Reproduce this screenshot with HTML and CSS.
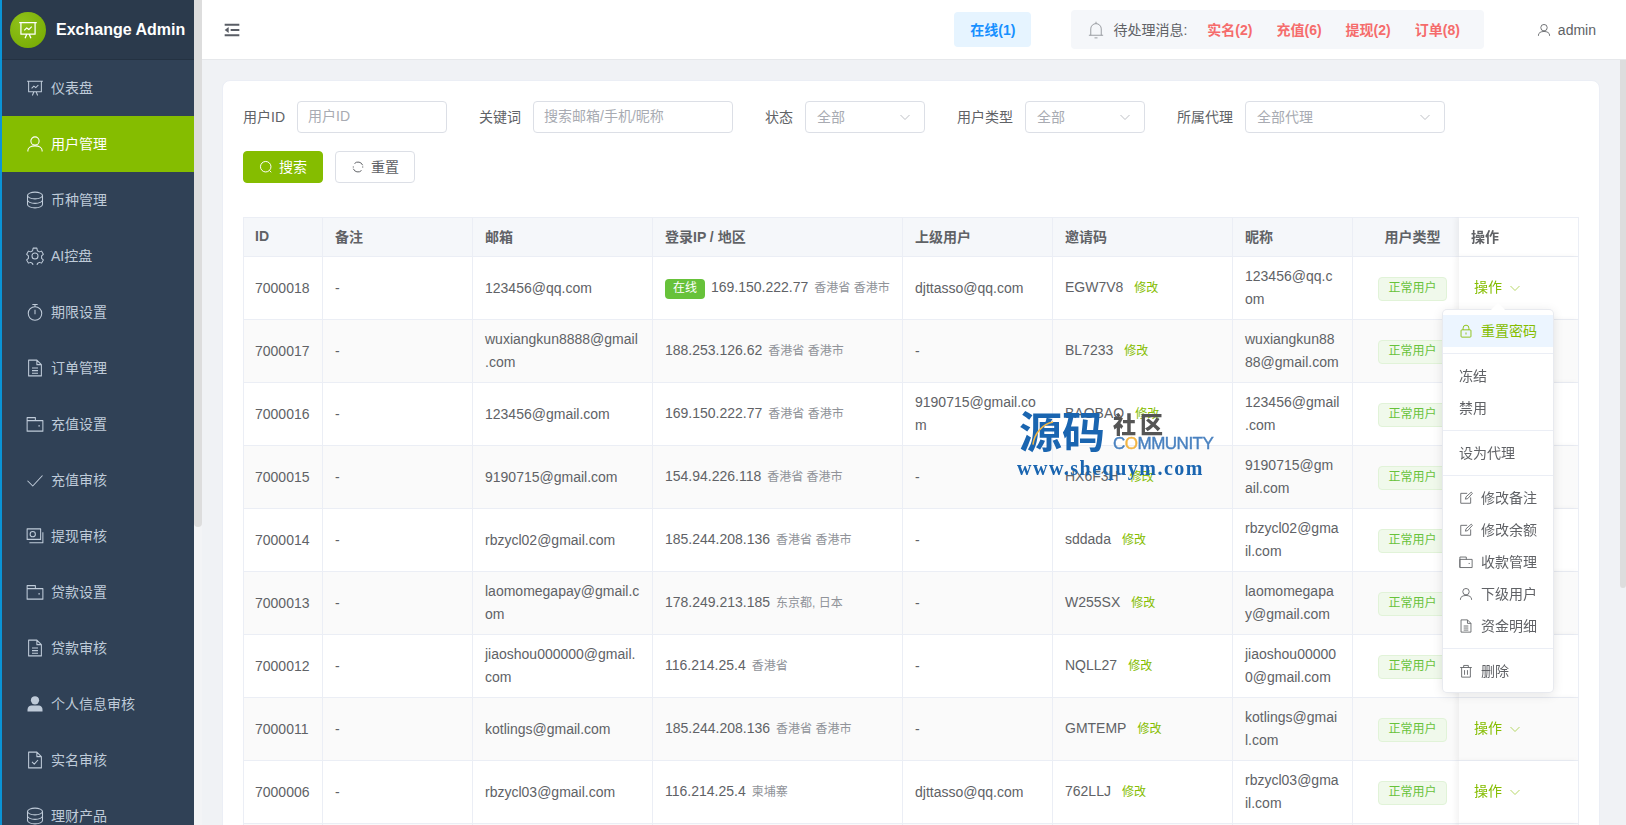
FILE: index.html
```html
<!DOCTYPE html>
<html lang="zh-CN">
<head>
    <meta charset="UTF-8" />
    <title>Exchange Admin</title>
    <link rel="stylesheet" href="styles.css">
</head>
<body>
    <!-- icon sprite -->
    <svg class="sprite" xmlns="http://www.w3.org/2000/svg">
        <symbol id="i-board" viewBox="0 0 24 24"><path d="M1.500 3h21M3.500 3v14h17V3M8.500 22l2-5M15.500 22l-2-5M7.500 12.500l3-3 2.500 2 3.500-3.500"/></symbol>
        <symbol id="i-user" viewBox="0 0 24 24"><circle cx="12" cy="8" r="5.500"/><path d="M2.500 22v-1.500c0-3.500 4-6 9.500-6s9.500 2.500 9.500 6V22"/></symbol>
        <symbol id="i-coin" viewBox="0 0 24 24"><ellipse cx="12" cy="6" rx="10" ry="4.500"/><path d="M2 6v12c0 2.500 4.500 4.500 10 4.500s10-2 10-4.500V6M2 12c0 2.500 4.500 4.500 10 4.500s10-2 10-4.500"/></symbol>
        <symbol id="i-gear" viewBox="0 0 24 24"><circle cx="12" cy="12" r="4"/><path d="M9.500 1.500h5l.7 3.500 2.600 1.500 3-1 2.300 4.300-2.300 2v3.400l2.300 2-2.300 4.300-3-1-2.600 1.500-.7 3.500h-5l-.7-3.500-2.600-1.500-3 1-2.300-4.300 2.300-2v-3.400l-2.300-2 2.300-4.300 3 1 2.600-1.500z"/></symbol>
        <symbol id="i-timer" viewBox="0 0 24 24"><circle cx="12" cy="14" r="9"/><path d="M12 15V9M12 5V2M8.500 2h7"/></symbol>
        <symbol id="i-doc" viewBox="0 0 24 24"><path d="M3.500 1.500h11l6 6v15h-17zM14.500 1.500v6h6M8 12h8M8 15.500h8M8 19h8"/></symbol>
        <symbol id="i-wallet" viewBox="0 0 24 24"><path d="M1.500 21.500v-18h11v4M1.500 7.500h21v14h-21zM16.500 14.500h2"/></symbol>
        <symbol id="i-check" viewBox="0 0 24 24"><path d="M2 13l7 7L22 6"/></symbol>
        <symbol id="i-money" viewBox="0 0 24 24"><path d="M1.500 2.500h18v14h-18zM4.500 21h18V7"/><circle cx="9" cy="9.500" r="3.500"/></symbol>
        <symbol id="i-person" viewBox="0 0 24 24"><circle class="solid" cx="12" cy="7" r="5.500"/><path class="solid" d="M2 22v-2.500c0-4 3-5.500 5-5.500h10c2 0 5 1.500 5 5.500V22z"/></symbol>
        <symbol id="i-doccheck" viewBox="0 0 24 24"><path d="M3.500 1.500h11l6 6v15h-17zM14.500 1.500v6h6M8 14.500l3 3 5-5.500"/></symbol>
        <symbol id="i-lock" viewBox="0 0 24 24"><rect x="3.500" y="10" width="17" height="12.500" rx="1.500"/><path d="M7 10V7a5 5 0 0110 0v3M12 14.500v3.500"/></symbol>
        <symbol id="i-edit" viewBox="0 0 24 24"><path d="M14 4H3v17h17V11M11 14l1-4 9-8 2 2-8 9z"/></symbol>
        <symbol id="i-trash" viewBox="0 0 24 24"><path d="M2 6h20M8 6V2.500h8V6M4.500 6v16.500h15V6M9.500 10.500v8M14.500 10.500v8"/></symbol>
        <symbol id="i-bell" viewBox="0 0 24 24"><path d="M12 1v2.500M5 19v-8.500a7 7 0 0114 0V19M2.500 19h19M10 22.500h4"/></symbol>
        <symbol id="i-search" viewBox="0 0 24 24"><circle cx="11.500" cy="11.500" r="9"/><path d="M18 18l3 3"/></symbol>
        <symbol id="i-refresh" viewBox="0 0 24 24"><path d="M20 9a8.500 8.500 0 00-14-3M4 15a8.500 8.500 0 0014 3"/><path d="M3 12h2M19 12h2"/></symbol>
        <symbol id="i-chevron" viewBox="0 0 24 24"><path d="M3 8l9 9 9-9"/></symbol>
    </svg>

    <div class="layout">
        <aside class="sidebar">
            <div class="brand">
                <span class="brand-logo"><svg class="icon"><use href="#i-board"/></svg></span>
                <span class="brand-name">Exchange Admin</span>
            </div>
            <nav class="menu">
                <a class="menu-item"><svg class="icon"><use href="#i-board"/></svg>仪表盘</a>
                <a class="menu-item active"><svg class="icon"><use href="#i-user"/></svg>用户管理</a>
                <a class="menu-item"><svg class="icon"><use href="#i-coin"/></svg>币种管理</a>
                <a class="menu-item"><svg class="icon"><use href="#i-gear"/></svg>AI控盘</a>
                <a class="menu-item"><svg class="icon"><use href="#i-timer"/></svg>期限设置</a>
                <a class="menu-item"><svg class="icon"><use href="#i-doc"/></svg>订单管理</a>
                <a class="menu-item"><svg class="icon"><use href="#i-wallet"/></svg>充值设置</a>
                <a class="menu-item"><svg class="icon"><use href="#i-check"/></svg>充值审核</a>
                <a class="menu-item"><svg class="icon"><use href="#i-money"/></svg>提现审核</a>
                <a class="menu-item"><svg class="icon"><use href="#i-wallet"/></svg>贷款设置</a>
                <a class="menu-item"><svg class="icon"><use href="#i-doc"/></svg>贷款审核</a>
                <a class="menu-item"><svg class="icon"><use href="#i-person"/></svg>个人信息审核</a>
                <a class="menu-item"><svg class="icon"><use href="#i-doccheck"/></svg>实名审核</a>
                <a class="menu-item"><svg class="icon"><use href="#i-coin"/></svg>理财产品</a>
            </nav>
        </aside>
        <div class="side-track"><div class="side-thumb"></div></div>

        <div class="main">
            <header class="topbar">
                <svg class="fold" viewBox="0 0 24 24"><path d="M1 4h22M10 12h13M1 20h22"/><path class="solid" d="M1 12l6-4.500v9z"/></svg>
                <div class="online-pill">在线(1)</div>
                <div class="notice">
                    <svg class="icon bell"><use href="#i-bell"/></svg>
                    <span class="notice-label">待处理消息:</span>
                    <a class="notice-link">实名(2)</a>
                    <a class="notice-link">充值(6)</a>
                    <a class="notice-link">提现(2)</a>
                    <a class="notice-link">订单(8)</a>
                </div>
                <div class="account"><svg class="icon"><use href="#i-user"/></svg>admin</div>
            </header>

            <div class="body-row">
                <main class="content">
                    <section class="card">
                        <form class="filters">
                            <div class="field"><label>用户ID</label><input class="input w150" placeholder="用户ID"></div>
                            <div class="field"><label>关键词</label><input class="input w200" placeholder="搜索邮箱/手机/昵称"></div>
                            <div class="field"><label>状态</label><div class="input select w120">全部<svg class="icon"><use href="#i-chevron"/></svg></div></div>
                            <div class="field"><label>用户类型</label><div class="input select w120">全部<svg class="icon"><use href="#i-chevron"/></svg></div></div>
                            <div class="field"><label>所属代理</label><div class="input select w200">全部代理<svg class="icon"><use href="#i-chevron"/></svg></div></div>
                            <div class="field">
                                <button type="button" class="btn btn-primary"><svg class="icon"><use href="#i-search"/></svg>搜索</button>
                                <button type="button" class="btn"><svg class="icon"><use href="#i-refresh"/></svg>重置</button>
                            </div>
                        </form>

                        <div class="table-wrap">
                            <table class="users">
                                <colgroup>
                                    <col class="c80"><col class="c150"><col class="c180"><col class="c250"><col class="c150"><col class="c180"><col class="c120"><col class="c120"><col class="c120">
                                </colgroup>
                                <thead>
                                    <tr><th>ID</th><th>备注</th><th>邮箱</th><th>登录IP / 地区</th><th>上级用户</th><th>邀请码</th><th>昵称</th><th class="center">用户类型</th><th class="fixed">操作</th></tr>
                                </thead>
                                <tbody>
                                    <tr>
                                        <td>7000018</td><td>-</td><td>123456@qq.com</td>
                                        <td class="ip"><span class="tag-online">在线</span>169.150.222.77<span class="region">香港省 香港市</span></td>
                                        <td>djttasso@qq.com</td><td>EGW7V8<a class="mini">修改</a></td><td>123456@qq.com</td>
                                        <td class="center"><span class="tag">正常用户</span></td>
                                        <td class="fixed"><a class="action">操作<svg class="icon"><use href="#i-chevron"/></svg></a></td>
                                    </tr>
                                    <tr>
                                        <td>7000017</td><td>-</td><td>wuxiangkun8888@gmail.com</td>
                                        <td class="ip">188.253.126.62<span class="region">香港省 香港市</span></td>
                                        <td>-</td><td>BL7233<a class="mini">修改</a></td><td>wuxiangkun8888@gmail.com</td>
                                        <td class="center"><span class="tag">正常用户</span></td>
                                        <td class="fixed"><a class="action">操作<svg class="icon"><use href="#i-chevron"/></svg></a></td>
                                    </tr>
                                    <tr>
                                        <td>7000016</td><td>-</td><td>123456@gmail.com</td>
                                        <td class="ip">169.150.222.77<span class="region">香港省 香港市</span></td>
                                        <td>9190715@gmail.com</td><td>BAOBAO<a class="mini">修改</a></td><td>123456@gmail.com</td>
                                        <td class="center"><span class="tag">正常用户</span></td>
                                        <td class="fixed"><a class="action">操作<svg class="icon"><use href="#i-chevron"/></svg></a></td>
                                    </tr>
                                    <tr>
                                        <td>7000015</td><td>-</td><td>9190715@gmail.com</td>
                                        <td class="ip">154.94.226.118<span class="region">香港省 香港市</span></td>
                                        <td>-</td><td>HX6F3H<a class="mini">修改</a></td><td>9190715@gmail.com</td>
                                        <td class="center"><span class="tag">正常用户</span></td>
                                        <td class="fixed"><a class="action">操作<svg class="icon"><use href="#i-chevron"/></svg></a></td>
                                    </tr>
                                    <tr>
                                        <td>7000014</td><td>-</td><td>rbzycl02@gmail.com</td>
                                        <td class="ip">185.244.208.136<span class="region">香港省 香港市</span></td>
                                        <td>-</td><td>sddada<a class="mini">修改</a></td><td>rbzycl02@gmail.com</td>
                                        <td class="center"><span class="tag">正常用户</span></td>
                                        <td class="fixed"><a class="action">操作<svg class="icon"><use href="#i-chevron"/></svg></a></td>
                                    </tr>
                                    <tr>
                                        <td>7000013</td><td>-</td><td>laomomegapay@gmail.com</td>
                                        <td class="ip">178.249.213.185<span class="region">东京都, 日本</span></td>
                                        <td>-</td><td>W255SX<a class="mini">修改</a></td><td>laomomegapay@gmail.com</td>
                                        <td class="center"><span class="tag">正常用户</span></td>
                                        <td class="fixed"><a class="action">操作<svg class="icon"><use href="#i-chevron"/></svg></a></td>
                                    </tr>
                                    <tr>
                                        <td>7000012</td><td>-</td><td>jiaoshou000000@gmail.com</td>
                                        <td class="ip">116.214.25.4<span class="region">香港省</span></td>
                                        <td>-</td><td>NQLL27<a class="mini">修改</a></td><td>jiaoshou000000@gmail.com</td>
                                        <td class="center"><span class="tag">正常用户</span></td>
                                        <td class="fixed"><a class="action">操作<svg class="icon"><use href="#i-chevron"/></svg></a></td>
                                    </tr>
                                    <tr>
                                        <td>7000011</td><td>-</td><td>kotlings@gmail.com</td>
                                        <td class="ip">185.244.208.136<span class="region">香港省 香港市</span></td>
                                        <td>-</td><td>GMTEMP<a class="mini">修改</a></td><td>kotlings@gmail.com</td>
                                        <td class="center"><span class="tag">正常用户</span></td>
                                        <td class="fixed"><a class="action">操作<svg class="icon"><use href="#i-chevron"/></svg></a></td>
                                    </tr>
                                    <tr>
                                        <td>7000006</td><td>-</td><td>rbzycl03@gmail.com</td>
                                        <td class="ip">116.214.25.4<span class="region">柬埔寨</span></td>
                                        <td>djttasso@qq.com</td><td>762LLJ<a class="mini">修改</a></td><td>rbzycl03@gmail.com</td>
                                        <td class="center"><span class="tag">正常用户</span></td>
                                        <td class="fixed"><a class="action">操作<svg class="icon"><use href="#i-chevron"/></svg></a></td>
                                    </tr>
                                    <tr class="blank"><td></td><td></td><td></td><td></td><td></td><td></td><td></td><td></td><td class="fixed"></td></tr>
                                </tbody>
                            </table>
                        </div>
                    </section>
                </main>
                <div class="page-track"><div class="page-thumb"></div></div>
            </div>
        </div>
    </div>

    <!-- open row menu -->
    <div class="dropdown">
        <a class="drop-item on"><svg class="icon"><use href="#i-lock"/></svg>重置密码</a>
        <hr>
        <a class="drop-item">冻结</a>
        <a class="drop-item">禁用</a>
        <hr>
        <a class="drop-item">设为代理</a>
        <hr>
        <a class="drop-item"><svg class="icon"><use href="#i-edit"/></svg>修改备注</a>
        <a class="drop-item"><svg class="icon"><use href="#i-edit"/></svg>修改余额</a>
        <a class="drop-item"><svg class="icon"><use href="#i-wallet"/></svg>收款管理</a>
        <a class="drop-item"><svg class="icon"><use href="#i-user"/></svg>下级用户</a>
        <a class="drop-item"><svg class="icon"><use href="#i-doc"/></svg>资金明细</a>
        <hr>
        <a class="drop-item"><svg class="icon"><use href="#i-trash"/></svg>删除</a>
    </div>

    <!-- site watermark -->
    <div class="watermark">
        <svg class="wm-arc" viewBox="0 0 40 40"><path d="M3 38C5 20 18 6 34 3"/></svg>
        <span class="wm-big">源码</span>
        <span class="wm-she">社区</span>
        <span class="wm-com">C<b>O</b>MMUNITY</span>
        <span class="wm-url">www.shequym.com</span>
    </div>
</body>
</html>
```

FILE: styles.css
```css
*
{
    box-sizing: border-box;
}

html, body
{
    margin: 0;
    height: 100%;
    overflow: hidden;
}

body
{
    font-family: "Liberation Sans", "Noto Sans CJK SC", sans-serif;
    font-size: 14px;
    color: #606266;
    background-color: #f0f2f5;
}

.sprite
{
    display: none;
}

.icon
{
    width: 16px;
    height: 16px;
    flex: none;
    fill: none;
    stroke: currentColor;
    stroke-width: 1.6;
    stroke-linejoin: round;
}

.solid
{
    fill: currentColor;
    stroke: none;
}

.layout
{
    display: flex;
    height: 825px;
}

/* sidebar */
.sidebar
{
    width: 194px;
    flex: none;
    overflow: hidden;
    background-color: #304156;
    border-left: 2px solid #0a94d6;
}

.brand
{
    display: flex;
    align-items: center;
    height: 60px;
    padding-left: 8px;
    gap: 10px;
    background-color: #2b3a4c;
    border-bottom: 1px solid #243242;
}

.brand-logo
{
    display: flex;
    align-items: center;
    justify-content: center;
    width: 36px;
    height: 36px;
    border-radius: 50%;
    color: white;
    background: radial-gradient(circle at 35% 30%, #8fc21a, #74a800);
}

.brand-logo .icon
{
    width: 20px;
    height: 20px;
    stroke-width: 1.5;
}

.brand-name
{
    color: white;
    font-size: 16px;
    font-weight: bold;
    white-space: nowrap;
}

.menu-item
{
    display: flex;
    align-items: center;
    height: 56px;
    padding: 0 0 2px 24px;
    gap: 7px;
    color: #bfcbd9;
}

.menu-item .icon
{
    width: 18px;
    height: 18px;
    margin-top: 2px;
    stroke-width: 1.4;
}

.menu-item.active
{
    color: white;
    background-color: #85bd00;
}

.side-track
{
    width: 8px;
    flex: none;
    background-color: #f3f4f6;
}

.side-thumb
{
    height: 527px;
    background-color: #dddddd;
    border-radius: 0 0 4px 4px;
}

/* top bar */
.main
{
    flex: 1;
    min-width: 0;
    display: flex;
    flex-direction: column;
}

.topbar
{
    display: flex;
    align-items: center;
    flex: none;
    height: 60px;
    padding: 0 30px 0 22px;
    background-color: white;
    border-bottom: 1px solid #e6e8eb;
}

.fold
{
    width: 16px;
    height: 16px;
    color: #5a5e66;
    fill: none;
    stroke: currentColor;
    stroke-width: 3;
}

.online-pill
{
    margin-left: auto;
    padding: 0 16px;
    height: 35px;
    line-height: 37px;
    border-radius: 4px;
    font-weight: bold;
    color: #1890ff;
    background-color: #e6f4ff;
}

.notice
{
    display: flex;
    align-items: center;
    gap: 24px;
    height: 39px;
    margin-left: 40px;
    padding: 0 24px 0 16px;
    border-radius: 4px;
    background-color: #f5f7fa;
}

.bell
{
    width: 18px;
    height: 18px;
    margin: 1px -14px 0 0;
    color: #909399;
    stroke-width: 1.2;
}

.notice-label
{
    margin: 0 -4px 2px -2px;
}

.notice-link
{
    margin-bottom: 2px;
    font-weight: bold;
    color: #f56c6c;
}

.account
{
    display: flex;
    align-items: center;
    gap: 7px;
    margin-left: 53px;
}

.account .icon
{
    width: 14px;
    height: 14px;
    stroke-width: 1.5;
}

/* content */
.body-row
{
    flex: 1;
    min-height: 0;
    display: flex;
}

.content
{
    flex: 1;
    min-width: 0;
    padding: 20px;
}

.page-track
{
    width: 6px;
    flex: none;
}

.page-thumb
{
    height: 528px;
    background-color: #dddddd;
    border-radius: 0 0 3px 3px;
}

.card
{
    height: 900px;
    padding: 20px;
    background-color: white;
    border: 1px solid #ebeef5;
    border-radius: 8px;
}

.filters
{
    display: flex;
    flex-wrap: wrap;
    column-gap: 32px;
    row-gap: 18px;
    margin-bottom: 34px;
}

.field
{
    display: flex;
    align-items: center;
    gap: 12px;
}

.field label
{
    margin-bottom: 2px;
}

.input
{
    height: 32px;
    padding: 0 11px 2px;
    font: inherit;
    color: #a8abb2;
    background-color: white;
    border: 1px solid #dcdfe6;
    border-radius: 4px;
}

input.input
{
    padding-left: 10px;
}

.input::placeholder
{
    color: #a8abb2;
}

.w120
{
    width: 120px;
}

.w150
{
    width: 150px;
}

.w200
{
    width: 200px;
}

.select
{
    display: flex;
    align-items: center;
    justify-content: space-between;
}

.select .icon
{
    width: 12px;
    height: 12px;
    margin: 2px 2px 0 0;
    stroke-width: 1.5;
}

.btn
{
    display: flex;
    align-items: center;
    justify-content: center;
    gap: 6px;
    width: 80px;
    height: 32px;
    padding: 0 0 2px;
    font: inherit;
    color: #606266;
    background-color: white;
    border: 1px solid #dcdfe6;
    border-radius: 4px;
}

.btn .icon
{
    width: 14px;
    height: 14px;
    margin-top: 2px;
    stroke-width: 1.7;
}

.btn-primary
{
    color: white;
    background-color: #85bd00;
    border-color: #85bd00;
}

/* table */
.table-wrap
{
    overflow: hidden;
}

.users
{
    table-layout: fixed;
    width: 1350px;
    border-collapse: separate;
    border-spacing: 0;
}

.c80
{
    width: 80px;
}

.c120
{
    width: 120px;
}

.c150
{
    width: 150px;
}

.c180
{
    width: 180px;
}

.c250
{
    width: 250px;
}

.users th, .users td
{
    padding: 0 12px;
    text-align: left;
    border-right: 1px solid #ebeef5;
    border-bottom: 1px solid #ebeef5;
}

.users th
{
    height: 40px;
    padding-bottom: 2px;
    font-weight: bold;
    background-color: #f5f7fa;
    border-top: 1px solid #ebeef5;
}

.users td
{
    height: 63px;
    line-height: 23px;
    overflow-wrap: break-word;
    background-color: white;
}

/* left edge drawn over the cell so the text keeps its 12px */
.users th:first-child, .users td:first-child
{
    padding-right: 0;
    box-shadow: inset 1px 0 0 #ebeef5;
}

.users .ip
{
    white-space: nowrap;
}

.users tbody tr:nth-child(even) td
{
    background-color: #fafafa;
}

.users .center
{
    text-align: center;
}

.users .fixed
{
    position: sticky;
    right: 0;
    background-color: white;
    box-shadow: -3px 0 6px rgba(0, 0, 0, 0.05);
}

.tag-online
{
    display: inline-block;
    width: 40px;
    height: 20px;
    margin-right: 6px;
    line-height: 19px;
    text-align: center;
    font-size: 12px;
    color: white;
    background-color: #67c23a;
    border-radius: 4px;
}

.region
{
    margin-left: 6px;
    font-size: 12px;
    color: #909399;
}

.mini
{
    margin-left: 11px;
    font-size: 12px;
    color: #85bd00;
}

.tag
{
    display: inline-block;
    height: 24px;
    padding: 0 9px;
    line-height: 21px;
    font-size: 12px;
    color: #67c23a;
    background-color: #f0f9eb;
    border: 1px solid #e1f3d8;
    border-radius: 4px;
}

.action
{
    display: inline-flex;
    align-items: center;
    gap: 7px;
    margin-left: 3px;
    padding-bottom: 2px;
    color: #85bd00;
}

.action .icon
{
    width: 12px;
    height: 12px;
    margin-top: 2px;
    stroke-width: 1.6;
    opacity: 0.75;
}

/* dropdown */
.dropdown
{
    position: absolute;
    left: 1443px;
    top: 310px;
    width: 110px;
    padding: 5px 0;
    background-color: white;
    border-radius: 4px;
    box-shadow: 0 0 0 1px #e8eaef, 0 2px 12px rgba(0, 0, 0, 0.12);
}

.dropdown::before
{
    content: "";
    position: absolute;
    left: 50px;
    top: -5px;
    width: 10px;
    height: 10px;
    background-color: white;
    transform: rotate(45deg);
}

.dropdown hr
{
    height: 1px;
    margin: 6px 0;
    background-color: #ebeef5;
    border: none;
}

.drop-item
{
    position: relative;
    display: flex;
    align-items: center;
    gap: 8px;
    height: 32px;
    padding: 0 0 2px 16px;
    color: #606266;
}

.drop-item .icon
{
    width: 14px;
    height: 14px;
    margin-top: 2px;
    stroke-width: 1.5;
}

.drop-item.on
{
    color: #85bd00;
    background-color: #ecf5ff;
}

/* watermark */
.watermark
{
    position: absolute;
    left: 1016px;
    top: 404px;
    width: 200px;
    height: 76px;
    pointer-events: none;
}

.watermark span
{
    position: absolute;
    white-space: nowrap;
}

.wm-big
{
    left: 3px;
    top: -6px;
    font-size: 43px;
    font-weight: bold;
    color: #1a65b0;
}

.wm-she
{
    left: 97px;
    top: 7px;
    font-size: 23px;
    line-height: 28px;
    font-weight: 900;
    letter-spacing: 4px;
    color: #555555;
}

.wm-com
{
    left: 97px;
    top: 30px;
    font-size: 17px;
    line-height: 20px;
    letter-spacing: -0.5px;
    color: #4a82c0;
    -webkit-text-stroke: 0.4px #4a82c0;
}

.wm-com b
{
    font-weight: normal;
    color: #f2b544;
    -webkit-text-stroke: 0.4px #f2b544;
}

.wm-url
{
    left: 1px;
    top: 53px;
    font-family: "Liberation Serif", serif;
    font-size: 20px;
    line-height: 22px;
    font-weight: bold;
    letter-spacing: 1.5px;
    color: #1a65b0;
}

.wm-arc
{
    position: absolute;
    z-index: 1;
    left: 15px;
    top: 13px;
    width: 26px;
    height: 32px;
    fill: none;
    stroke: #f2b544;
    stroke-width: 2.5;
}
```
